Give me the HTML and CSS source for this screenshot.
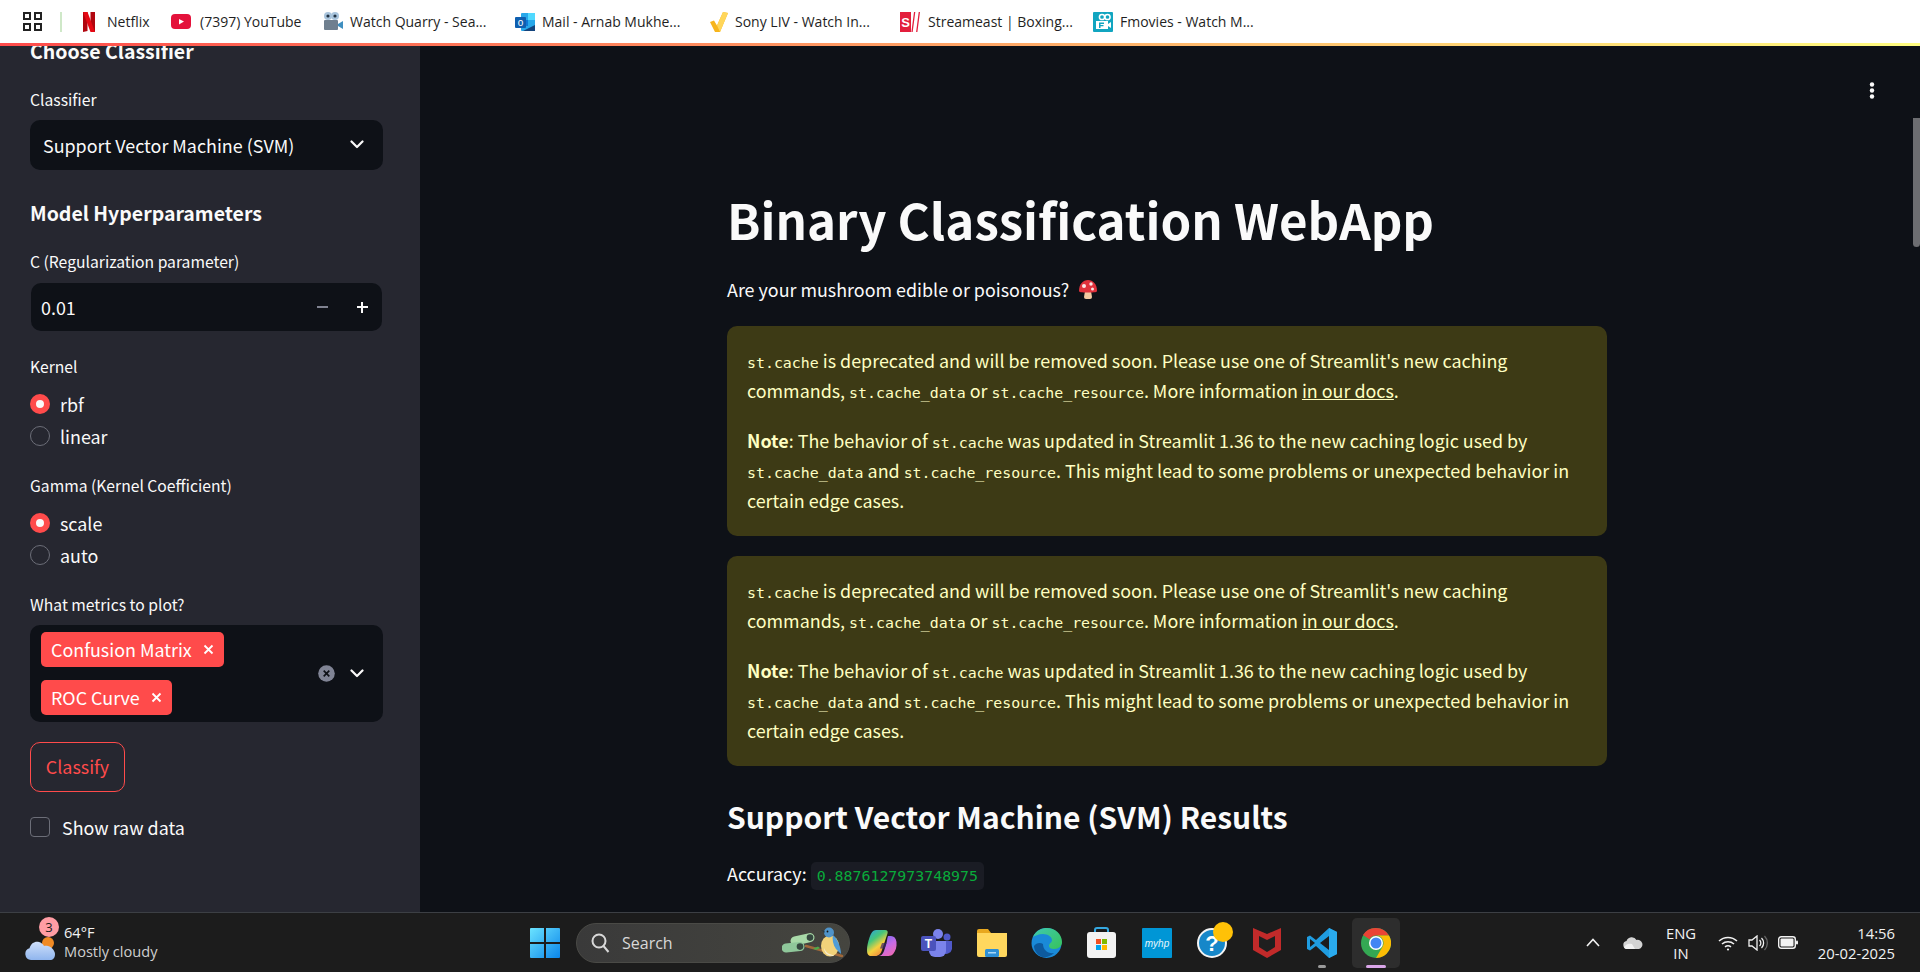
FILE: index.html
```html
<!DOCTYPE html>
<html lang="en">
<head>
  <meta charset="UTF-8">
  <title>Binary Classification WebApp</title>
  <link rel="stylesheet" href="styles.css">
</head>
<body>
  <!-- browser bookmarks bar -->
  <nav class="bookmarks">
    <svg class="apps" width="19" height="19" viewBox="0 0 19 19" fill="none" stroke="#222" stroke-width="2"><rect x="1" y="1" width="6" height="6"/><rect x="12" y="1" width="6" height="6"/><rect x="1" y="12" width="6" height="6"/><rect x="12" y="12" width="6" height="6"/></svg>
    <span class="bm-sep"></span>
    <a class="bm bm-netflix"><svg width="20" height="20" viewBox="0 0 20 20"><path d="M4 0h4.500v19L4 20z" fill="#b1060f"/><path d="M11.500 0H16v20l-4.500-1z" fill="#b1060f"/><path d="M4 0h4.500L16 20h-4.500z" fill="#e50914"/></svg>Netflix</a>
    <a class="bm bm-youtube"><svg width="20" height="20" viewBox="0 0 20 20"><rect y="2" width="20" height="15" rx="4" fill="#e4123b"/><path d="M8 7l5 2.6L8 12.4z" fill="#fff"/></svg>(7397) YouTube</a>
    <a class="bm bm-quarry"><svg width="20" height="22" viewBox="0 0 20 22"><rect x="1" y="9" width="14" height="10" rx="1" fill="#6f7f8f"/><path d="M15 13l5-3v8l-5-3z" fill="#3f8fc0"/><circle cx="5" cy="5" r="4" fill="#a9c4dc"/><circle cx="12" cy="5" r="4" fill="#a9c4dc"/><circle cx="5" cy="5" r="1.6" fill="#234"/><circle cx="12" cy="5" r="1.6" fill="#234"/></svg>Watch Quarry - Sea...</a>
    <a class="bm bm-mail"><svg width="20" height="20" viewBox="0 0 20 20"><rect x="6" y="1" width="14" height="18" rx="1" fill="#28a8ea"/><rect x="13" y="1" width="7" height="7" fill="#50d9ff"/><rect x="6" y="8" width="7" height="6" fill="#0f78d4"/><path d="M8 19l12-6v6z" fill="#14447d"/><rect y="5" width="11" height="11" rx="1" fill="#0f5fb0"/><text x="5.5" y="14" class="svg-letter" font-size="10" fill="#fff" text-anchor="middle">o</text></svg>Mail - Arnab Mukhe...</a>
    <a class="bm bm-sony"><svg width="20" height="20" viewBox="0 0 20 20"><path d="M1 10l4-1.500 3 5L14 0l5 1-8 19H6z" fill="#f7b51c"/><path d="M8 13.500L14 0l5 1-8 19z" fill="#ffd65a"/></svg>Sony LIV - Watch In...</a>
    <a class="bm bm-stream"><svg width="20" height="20" viewBox="0 0 20 20"><rect width="11" height="20" fill="#e31e3c"/><path d="M14 0h1.300l-2.600 20h-1.300zM18.700 0H20l-2.600 20h-1.300z" fill="#e31e3c"/><text x="5.500" y="14.500" class="svg-letter" font-size="13" font-weight="700" fill="#fff" text-anchor="middle">S</text></svg>Streameast | Boxing...</a>
    <a class="bm bm-fmovies"><svg width="20" height="20" viewBox="0 0 20 20"><rect width="20" height="20" rx="1" fill="#11a5c0"/><circle cx="9" cy="5" r="2.600" fill="none" stroke="#fff" stroke-width="1.500"/><circle cx="14.500" cy="5" r="2.600" fill="none" stroke="#fff" stroke-width="1.500"/><rect x="3" y="9" width="12" height="8" fill="#fff"/><path d="M15 12l3-2v6l-3-2z" fill="#fff"/><path d="M6 10.500h5v1.400H7.500v1h3v1.400h-3V16H6z" fill="#11a5c0"/></svg>Fmovies - Watch M...</a>
  </nav>
  <div class="accent"></div>

  <div class="app">
    <aside class="sidebar">
      <div class="sidebar-inner">
        <h2 class="side-title">Choose Classifier</h2>
        <label class="side-label label-classifier">Classifier</label>
        <div class="select">
          <span>Support Vector Machine (SVM)</span>
          <svg class="chev" width="14" height="9" viewBox="0 0 14 9" fill="none" stroke="#fafafa" stroke-width="2.2" stroke-linecap="round" stroke-linejoin="round"><path d="M1.5 1.5L7 7l5.500-5.500"/></svg>
        </div>
        <h2 class="side-title title-model">Model Hyperparameters</h2>
        <label class="side-label label-c">C (Regularization parameter)</label>
        <div class="number">
          <span class="number-value">0.01</span>
          <span class="step step-minus"></span>
          <span class="step step-plus"></span>
        </div>
        <label class="side-label label-kernel">Kernel</label>
        <div class="radios">
          <div class="radio on"><i></i>rbf</div>
          <div class="radio"><i></i>linear</div>
        </div>
        <label class="side-label label-gamma">Gamma (Kernel Coefficient)</label>
        <div class="radios">
          <div class="radio on"><i></i>scale</div>
          <div class="radio"><i></i>auto</div>
        </div>
        <label class="side-label label-metrics">What metrics to plot?</label>
        <div class="multi">
          <div class="tags">
            <span class="tag">Confusion Matrix<svg width="11" height="11" viewBox="0 0 11 11" stroke="#fff" stroke-width="1.800"><path d="M1.500 1.500l8 8M9.500 1.500l-8 8"/></svg></span>
            <span class="tag">ROC Curve<svg width="11" height="11" viewBox="0 0 11 11" stroke="#fff" stroke-width="1.800"><path d="M1.500 1.500l8 8M9.500 1.500l-8 8"/></svg></span>
          </div>
          <svg class="clear" width="17" height="17" viewBox="0 0 17 17"><circle cx="8.500" cy="8.500" r="8.300" fill="#808495"/><path d="M5.700 5.700l5.600 5.600M11.300 5.700l-5.600 5.600" stroke="#0e1117" stroke-width="1.700"/></svg>
          <svg class="chev" width="14" height="9" viewBox="0 0 14 9" fill="none" stroke="#fafafa" stroke-width="2.200" stroke-linecap="round" stroke-linejoin="round"><path d="M1.500 1.500L7 7l5.500-5.500"/></svg>
        </div>
        <button class="classify">Classify</button>
        <div class="check"><i></i>Show raw data</div>
      </div>
    </aside>

    <main class="main">
      <svg class="kebab" width="6" height="17" viewBox="0 0 6 17" fill="#fafafa"><circle cx="3" cy="2.500" r="2.200"/><circle cx="3" cy="8.500" r="2.200"/><circle cx="3" cy="14.500" r="2.200"/></svg>
      <div class="scroll-thumb"></div>
      <div class="content">
        <h1>Binary Classification WebApp</h1>
        <p class="lead">Are your mushroom edible or poisonous?
          <svg class="shroom" width="20" height="20" viewBox="0 0 20 20"><path d="M7 12h6l1 6a2 2 0 0 1-2 2H8a2 2 0 0 1-2-2z" fill="#f3c9a0"/><path d="M1 12C1 5 5 1 10 1s9 4 9 11c0 1-2 1.500-9 1.500S1 13 1 12z" fill="#e0313c"/><circle cx="6" cy="7" r="2" fill="#fbe5e5"/><circle cx="13" cy="5" r="1.700" fill="#fbe5e5"/><circle cx="14.500" cy="10" r="1.500" fill="#fbe5e5"/></svg>
        </p>
        <div class="alert">
          <p><code>st.cache</code> is deprecated and will be removed soon. Please use one of Streamlit's new caching commands, <code>st.cache_data</code> or <code>st.cache_resource</code>. More information <a>in our docs</a>.</p>
          <p><strong>Note</strong>: The behavior of <code>st.cache</code> was updated in Streamlit 1.36 to the new caching logic used by <code>st.cache_data</code> and <code>st.cache_resource</code>. This might lead to some problems or unexpected behavior in certain edge cases.</p>
        </div>
        <div class="alert">
          <p><code>st.cache</code> is deprecated and will be removed soon. Please use one of Streamlit's new caching commands, <code>st.cache_data</code> or <code>st.cache_resource</code>. More information <a>in our docs</a>.</p>
          <p><strong>Note</strong>: The behavior of <code>st.cache</code> was updated in Streamlit 1.36 to the new caching logic used by <code>st.cache_data</code> and <code>st.cache_resource</code>. This might lead to some problems or unexpected behavior in certain edge cases.</p>
        </div>
        <h2 class="results">Support Vector Machine (SVM) Results</h2>
        <p class="accuracy">Accuracy: <code class="score">0.8876127973748975</code></p>
      </div>
    </main>
  </div>

  <!-- windows taskbar -->
  <footer class="taskbar">
    <div class="weather">
      <div class="weather-icon">
        <svg width="30" height="24" viewBox="0 0 30 24"><defs><linearGradient id="cloud" x1="0" y1="0" x2="0" y2="1"><stop offset="0" stop-color="#cfe0fa"/><stop offset="1" stop-color="#8fb5ee"/></linearGradient></defs><circle cx="23" cy="7" r="6" fill="#f08a24"/><path d="M6 24a6 6 0 0 1-1.500-11.700C6 7 10 5 14 6c2 .5 4 2 5 4 1-.5 2.500-.5 4 0 4 1 7 5 7 8 0 4-2 6-5 6z" fill="url(#cloud)"/></svg>
        <span class="badge">3</span>
      </div>
      <div class="weather-text"><span>64°F</span><span>Mostly cloudy</span></div>
    </div>
    <div class="center">
      <svg class="start" width="30" height="30" viewBox="0 0 30 30"><defs><linearGradient id="win" x1="0" y1="0" x2="1" y2="1"><stop offset="0" stop-color="#6be3ff"/><stop offset="1" stop-color="#0a85ea"/></linearGradient></defs><path d="M0 1a1 1 0 0 1 1-1h13v14H0zM16 0h13a1 1 0 0 1 1 1v13H16zM0 16h14v14H1a1 1 0 0 1-1-1zM16 16h14v13a1 1 0 0 1-1 1H16z" fill="url(#win)"/></svg>
      <div class="search">
        <svg width="19" height="20" viewBox="0 0 19 20" fill="none" stroke="#d8d8d8" stroke-width="2"><circle cx="8" cy="8" r="6.500"/><path d="M12.500 13l5 6"/></svg>
        <span>Search</span>
        <svg class="search-art" width="62" height="34" viewBox="0 0 62 34">
          <path d="M13 15l15-3.400" stroke="#a8d9a8" stroke-width="9" stroke-linecap="round"/>
          <path d="M4 22l14-1.400" stroke="#8fc79a" stroke-width="9" stroke-linecap="round"/>
          <circle cx="28" cy="11.600" r="3.300" fill="#35483f"/>
          <circle cx="18" cy="20.600" r="3.300" fill="#35483f"/>
          <path d="M24 20l36 10" stroke="#a0683a" stroke-width="2.500" stroke-linecap="round"/>
          <path d="M31 22.500l5-2 2 1.500-4 2z" fill="#4fa84a"/>
          <ellipse cx="48" cy="20" rx="9" ry="10.500" fill="#f1d27a"/>
          <path d="M42 22c2 5 6 7 10 7l-1 1c-5 0-9-3-9-8z" fill="#f4ead0"/>
          <circle cx="47" cy="6.500" r="5" fill="#4f93c9"/>
          <path d="M42.500 5l-3.500-1 3.500 3z" fill="#2a3a44"/>
          <path d="M51 9c4 3 8 12 8 19l-5-5c-3-4-4-10-3-14z" fill="#4f9cd6"/>
          <circle cx="45.500" cy="5.500" r=".9" fill="#111"/>
        </svg>
      </div>
      <div class="tray-apps">
        <span class="app-icon"><svg width="30" height="26" viewBox="0 0 30 26"><defs><linearGradient id="cop" x1="0" y1="0" x2=".6" y2="1"><stop offset="0" stop-color="#2a9fe8"/><stop offset=".4" stop-color="#46c67a"/><stop offset=".7" stop-color="#f5d13f"/><stop offset="1" stop-color="#f08a3c"/></linearGradient><linearGradient id="cop2" x1=".2" y1="0" x2=".8" y2="1"><stop offset="0" stop-color="#6f6cf0"/><stop offset=".5" stop-color="#c66be6"/><stop offset="1" stop-color="#f06ab0"/></linearGradient></defs><path d="M9 0h9c2.500 0 3 1.500 2.500 3.500L15 20c-1 3.500-3 6-7 6H4c-3 0-4-2.500-4-6 0-4 1-8 2.500-12.500C4 3 6 0 9 0z" fill="url(#cop)"/><path d="M21 6h3c3 0 5 2 5.500 6 .5 5-1 9-3 11.500-1.500 1.800-3 2.500-5 2.500H11c3 0 5-2 6-5l2.500-8c.5-2 .5-4 1.500-7z" fill="url(#cop2)"/><path d="M15 13h4.500l-1.500 4.500c-.3.800-1 1-1.700 1H13z" fill="#3a2a6a" opacity=".7"/></svg></span>
        <span class="app-icon"><svg width="31" height="28" viewBox="0 0 31 28"><circle cx="17" cy="5" r="5" fill="#7b83eb"/><circle cx="26" cy="8" r="3.500" fill="#5059c9"/><path d="M21 12h10v8a6 6 0 0 1-9 4z" fill="#5059c9"/><path d="M8 12h17v10a6 6 0 0 1-6 6h-5a6 6 0 0 1-6-6z" fill="#7b83eb"/><rect y="7" width="15" height="15" rx="2" fill="#4b53bc"/><text x="7.500" y="19" class="svg-letter" font-size="12" font-weight="700" fill="#fff" text-anchor="middle">T</text></svg></span>
        <span class="app-icon"><svg width="30" height="28" viewBox="0 0 30 28"><path d="M0 2a2 2 0 0 1 2-2h9l3 4h-14z" fill="#e8a81f"/><path d="M0 4h30v22a2 2 0 0 1-2 2H2a2 2 0 0 1-2-2z" fill="#ffd75e"/><rect x="8" y="20" width="14" height="8" rx="1.500" fill="#2d8fd5"/><rect x="11" y="23" width="8" height="1.500" fill="#a8d8f7"/></svg></span>
        <span class="app-icon"><svg width="31" height="30" viewBox="0 0 31 30"><defs><linearGradient id="edge" x1="0" y1="0" x2="1" y2="1"><stop offset="0" stop-color="#3fc9b0"/><stop offset="1" stop-color="#37c25a"/></linearGradient></defs><circle cx="15.500" cy="15" r="15" fill="#1a8ad8"/><path d="M2 9C5 2 11 0 16 0c8 0 15 6 15 14 0 4-3 7-8 7-3 0-5-1-5-3 0-3 3-3 3-6 0-3-4-6-9-6S4 8 2 9z" fill="url(#edge)"/><path d="M12 16c0 6 5 10 11 9-3 3-8 5-12 4-5-2-8-7-8-11 2-3 6-4 9-2z" fill="#0d5a9e"/></svg></span>
        <span class="app-icon"><svg width="29" height="31" viewBox="0 0 29 31"><path d="M8 7V3a2 2 0 0 1 2-2h9a2 2 0 0 1 2 2v4" fill="none" stroke="#35a8e0" stroke-width="2"/><rect y="5" width="29" height="26" rx="3" fill="#f3f3f3"/><rect x="9" y="12" width="5" height="5" fill="#f25022"/><rect x="15" y="12" width="5" height="5" fill="#7fba00"/><rect x="9" y="18" width="5" height="5" fill="#00a4ef"/><rect x="15" y="18" width="5" height="5" fill="#ffb900"/></svg></span>
        <span class="app-icon"><svg width="30" height="30" viewBox="0 0 30 30"><rect width="30" height="30" rx="1" fill="#0096d6"/><text x="15" y="19" class="svg-letter" font-size="10" font-style="italic" fill="#e8f6fc" text-anchor="middle">myhp</text></svg></span>
        <span class="app-icon app-help"><svg width="30" height="30" viewBox="0 0 30 30"><circle cx="15" cy="15" r="14" fill="#1687c9" stroke="#f4f4f4" stroke-width="2"/><text x="15" y="23" class="svg-letter" font-size="22" font-weight="700" fill="#fff" text-anchor="middle">?</text></svg><i class="help-dot"></i></span>
        <span class="app-icon"><svg width="28" height="30" viewBox="0 0 28 30"><path d="M0 0l14 6 14-6v22l-14 8-14-8z" fill="#c22a2a"/><path d="M6 8l8 4 8-4v11l-8 5-8-5z" fill="#1f1f1f"/></svg></span>
        <span class="app-icon app-open"><svg width="30" height="30" viewBox="0 0 30 30"><path d="M22 0l8 4v22l-8 4-13-12-6 4.500-3-1.500v-12l3-1.500 6 4.500z" fill="#1f9ce0"/><path d="M22 8l-9 7 9 7z" fill="#1c1c1c"/><path d="M22 0l8 4v22l-8 4z" fill="#2aabee"/><path d="M3 11l5 4-5 4z" fill="#1c1c1c"/></svg></span>
        <span class="app-icon app-chrome"><svg width="30" height="30" viewBox="0 0 30 30"><circle cx="15" cy="15" r="15" fill="#34a853"/><path d="M15 0a15 15 0 0 1 13 7.500H15a7.500 7.500 0 0 0-6.500 3.750L2 7a15 15 0 0 1 13-7z" fill="#ea4335"/><path d="M28 7.500A15 15 0 0 1 15 30l6.500-11.250A7.500 7.500 0 0 0 15 7.500z" fill="#fbbc04"/><circle cx="15" cy="15" r="7" fill="#fff"/><circle cx="15" cy="15" r="5.500" fill="#4285f4"/></svg></span>
      </div>
    </div>
    <div class="tray">
      <svg class="tray-chev" width="14" height="9" viewBox="0 0 14 9" fill="none" stroke="#f2f2f2" stroke-width="1.600"><path d="M1 8l6-6.500L13 8"/></svg>
      <svg class="onedrive" width="20" height="13" viewBox="0 0 20 13"><path d="M4 13a4 4 0 0 1-.5-7.900A5.500 5.500 0 0 1 13.500 4a4.500 4.500 0 0 1 2.500 9z" fill="#d4d4d4"/><path d="M3 13a3 3 0 0 1-2-2c2-3 5-4 8-3l3 5z" fill="#f2f2f2"/></svg>
      <div class="lang"><span>ENG</span><span>IN</span></div>
      <svg class="wifi" width="20" height="16" viewBox="0 0 20 16" fill="none" stroke="#f2f2f2" stroke-width="1.500"><path d="M1 6a13 13 0 0 1 18 0M4 9a9 9 0 0 1 12 0M7 11.800a5 5 0 0 1 6 0"/><circle cx="10" cy="14.500" r="1.100" fill="#f2f2f2" stroke="none"/></svg>
      <svg class="sound" width="20" height="16" viewBox="0 0 20 16" fill="none" stroke="#f2f2f2" stroke-width="1.300"><path d="M1 5h3l5-4v14l-5-4H1z"/><path d="M11.500 5a4 4 0 0 1 0 6M13.500 3a7 7 0 0 1 0 10"/><path d="M16.500 1a10 10 0 0 1 0 14" stroke="#666"/></svg>
      <svg class="battery" width="20" height="13" viewBox="0 0 20 13"><rect x=".7" y=".7" width="16.600" height="11.600" rx="2.500" fill="none" stroke="#f2f2f2" stroke-width="1.400"/><rect x="2.500" y="2.500" width="13" height="8" rx="1" fill="#f2f2f2"/><rect x="18" y="4.500" width="2" height="4" rx="1" fill="#f2f2f2"/></svg>
      <div class="clock"><span>14:56</span><span>20-02-2025</span></div>
    </div>
  </footer>
</body>
</html>
```

FILE: styles.css
```css
* {
  box-sizing: border-box;
}
html, body {
  height: 100%;
}
body {
  margin: 0;
  display: flex;
  flex-direction: column;
  overflow: hidden;
  background: #0e1117;
  color: #fafafa;
  font-family: "Noto Sans CJK SC", "Noto Sans", sans-serif;
}
svg {
  display: block;
  flex: none;
}
.svg-letter {
  font-family: "Liberation Sans", sans-serif;
}

/* bookmarks */
.bookmarks {
  height: 43px;
  flex: none;
  display: flex;
  align-items: center;
  padding-left: 23px;
  background: #fff;
  color: #1f1f1f;
  font-family: "Open Sans", sans-serif;
  font-size: 14px;
}
.bm-sep {
  width: 2px;
  height: 20px;
  margin: 0 17px 0 18px;
  background: #cfe8c8;
}
.bm {
  display: flex;
  align-items: center;
  gap: 7px;
  white-space: nowrap;
}
.bm-netflix { width: 92px; gap: 8px; }
.bm-youtube { width: 152px; gap: 9px; }
.bm-quarry { width: 192px; }
.bm-mail { width: 194px; }
.bm-sony { width: 191px; gap: 6px; }
.bm-stream { width: 193px; gap: 8px; }
.accent {
  height: 3px;
  flex: none;
  background: linear-gradient(90deg, #ff4b4b, #fffd80);
}

.app {
  flex: 1;
  min-height: 0;
  display: flex;
}

/* sidebar */
.sidebar {
  width: 420px;
  flex: none;
  overflow: hidden;
  background: #262730;
  padding: 0 37px 0 30px;
}
.sidebar-inner {
  margin-top: -11px;
}
.side-title {
  margin: 0;
  font-size: 19.5px;
  line-height: 32px;
  font-weight: 600;
}
.title-model { margin-top: 27px; }
.side-label {
  display: block;
  font-size: 15.7px;
  line-height: 24px;
  color: #fafafa;
}
.label-classifier { margin-top: 21px; }
.label-c { margin-top: 21px; }
.label-kernel { margin-top: 24px; }
.label-gamma { margin-top: 28px; }
.label-metrics { margin-top: 28px; }
.select {
  height: 50px;
  margin-top: 8px;
  display: flex;
  align-items: center;
  justify-content: space-between;
  padding: 0 19px 1px 13px;
  background: #0e1117;
  border-radius: 10px;
  font-size: 17.9px;
}
.number {
  height: 48px;
  margin: 9px 1px 0;
  display: flex;
  align-items: center;
  padding-left: 10px;
  background: #0e1117;
  border-radius: 10px;
  font-size: 17.9px;
}
.number-value {
  flex: 1;
}
.step {
  width: 40px;
  height: 48px;
  display: flex;
  align-items: center;
  justify-content: center;
}
.step::before {
  content: "";
  width: 11px;
  height: 2.4px;
  background: #7f8290;
}
.step-plus {
  position: relative;
}
.step-plus::before {
  background: #fafafa;
}
.step-plus::after {
  content: "";
  position: absolute;
  width: 2.4px;
  height: 11px;
  background: #fafafa;
}
.radios {
  margin-top: 15px;
  display: flex;
  flex-direction: column;
  gap: 12px;
}
.radio {
  height: 20px;
  display: flex;
  align-items: center;
  gap: 10px;
  font-size: 17.9px;
}
.radio i {
  width: 20px;
  height: 20px;
  border-radius: 50%;
  border: 1px solid #6c6e78;
}
.radio.on i {
  border: 6px solid #ff4b4b;
  background: #fafafa;
}
.multi {
  min-height: 97px;
  margin-top: 8px;
  display: flex;
  align-items: center;
  padding: 7px 19px 7px 11px;
  background: #0e1117;
  border-radius: 10px;
}
.tags {
  flex: 1;
  display: flex;
  flex-direction: column;
  align-items: flex-start;
  gap: 13px;
}
.tag {
  height: 35px;
  display: flex;
  align-items: center;
  gap: 11px;
  padding: 0 10px 1px;
  background: #ff4b4b;
  border-radius: 5px;
  font-size: 17.9px;
  color: #fff;
}
.clear {
  margin-right: 15px;
}
.classify {
  display: block;
  height: 50px;
  width: 95px;
  margin-top: 20px;
  padding-bottom: 3px;
  background: transparent;
  border: 1px solid #ff4b4b;
  border-radius: 10px;
  color: #ff4b4b;
  font-family: inherit;
  font-size: 17.9px;
}
.check {
  margin-top: 24px;
  height: 22px;
  display: flex;
  align-items: center;
  gap: 12px;
  font-size: 17.9px;
}
.check i {
  width: 20px;
  height: 20px;
  border: 1px solid #6c6e78;
  border-radius: 4px;
}

/* main */
.main {
  flex: 1;
  position: relative;
  overflow: hidden;
}
.kebab {
  position: absolute;
  top: 36px;
  right: 45px;
}
.scroll-thumb {
  position: absolute;
  top: 72px;
  right: 0;
  width: 7px;
  height: 129px;
  background: #6c6d71;
  border-radius: 0 0 4px 4px;
}
.content {
  width: 880px;
  margin-left: 307px;
  padding-top: 134px;
}
h1 {
  margin: 0;
  font-size: 49.2px;
  line-height: 78px;
  font-weight: 700;
}
.lead {
  margin: 15px 0 0;
  padding-bottom: 1px;
  display: flex;
  align-items: center;
  gap: 9px;
  font-size: 17.9px;
  line-height: 32px;
}
.alert {
  margin-top: 20px;
  padding: 19px 20px 21px;
  background: #3d3a15;
  border-radius: 10px;
  color: #ffffc2;
  font-size: 17.9px;
  line-height: 30px;
}
.alert p {
  margin: 0;
}
.alert p + p {
  margin-top: 20px;
}
.alert a {
  text-decoration: underline;
}
code {
  font-family: "DejaVu Sans Mono", monospace;
  font-size: 14.9px;
  line-height: 1;
}
.results {
  margin: 25px 0 0;
  font-size: 30px;
  line-height: 50px;
  font-weight: 600;
}
.accuracy {
  margin: 16px 0 0;
  font-size: 17.9px;
  line-height: 32px;
}
.score {
  padding: 5px 6px;
  background: #1a1c24;
  border-radius: 5px;
  color: #09ab3b;
}

/* taskbar */
.taskbar {
  height: 60px;
  flex: none;
  position: relative;
  display: flex;
  align-items: center;
  background: #1c1c1c;
  border-top: 1px solid #3c3f44;
  font-family: "Open Sans", sans-serif;
  font-size: 14.8px;
  color: #f2f2f2;
}
.weather {
  width: 530px;
  flex: none;
  display: flex;
  align-items: center;
  gap: 9px;
  padding-left: 25px;
}
.weather-icon {
  position: relative;
  padding-top: 10px;
}
.badge {
  position: absolute;
  top: -9px;
  left: 14px;
  width: 20px;
  height: 20px;
  border-radius: 50%;
  background: #ff9da4;
  color: #1c1c1c;
  text-align: center;
  line-height: 20px;
  font-size: 13px;
}
.weather-text {
  display: flex;
  flex-direction: column;
  gap: 1px;
  margin-top: -2px;
  font-size: 14.6px;
  line-height: 18px;
}
.weather-text span + span {
  color: #cfcfcf;
}
.center {
  display: flex;
  align-items: center;
}
.search {
  width: 274px;
  height: 40px;
  margin-left: 16px;
  display: flex;
  align-items: center;
  gap: 12px;
  padding-left: 14px;
  background: linear-gradient(90deg, #3a3a3a, #45453f);
  border: 1px solid #4a4a46;
  border-radius: 20px;
  color: #d8d8d8;
  font-size: 16px;
}
.search-art {
  margin-left: auto;
  margin-right: 5px;
}
.tray-apps {
  display: flex;
  margin-left: 4px;
}
.app-icon {
  width: 55px;
  height: 50px;
  display: flex;
  align-items: center;
  justify-content: center;
  position: relative;
}
.help-dot {
  position: absolute;
  top: 4px;
  left: 29px;
  width: 20px;
  height: 20px;
  border-radius: 50%;
  background: #ffc107;
}
.app-open::after, .app-chrome::after {
  content: "";
  position: absolute;
  left: 50%;
  bottom: 0;
  height: 3px;
  border-radius: 2px;
  transform: translateX(-50%);
}
.app-open::after {
  width: 8px;
  background: #9a9a9a;
}
.app-chrome {
  width: 48px;
  margin-left: 3px;
  background: #2d2d2d;
  border-radius: 5px;
}
.app-chrome::after {
  width: 20px;
  background: #d9a5e8;
}
.tray {
  margin-left: auto;
  display: flex;
  align-items: center;
  padding-right: 25px;
}
.onedrive { margin-left: 23px; }
.lang {
  width: 42px;
  margin-left: 17px;
  display: flex;
  flex-direction: column;
  align-items: center;
  line-height: 20px;
}
.wifi { margin-left: 16px; }
.sound { margin-left: 10px; }
.battery { margin-left: 10px; }
.clock {
  margin-left: 12px;
  width: 85px;
  display: flex;
  flex-direction: column;
  align-items: flex-end;
  line-height: 20px;
}
```
